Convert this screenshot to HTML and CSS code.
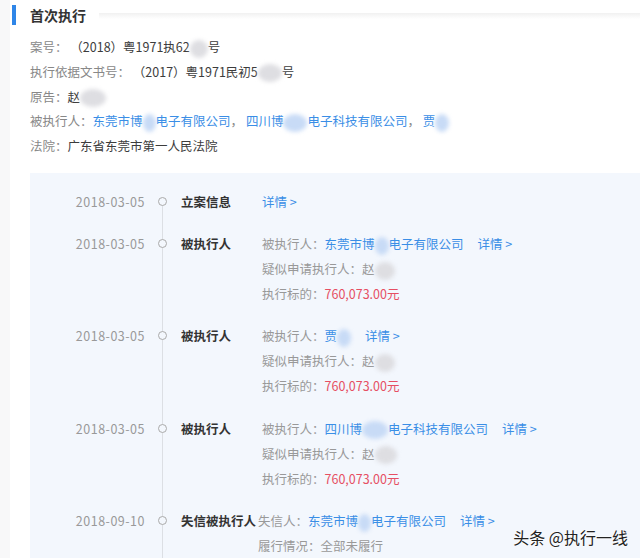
FILE: index.html
```html
<!DOCTYPE html>
<html lang="zh-CN">
<head>
  <meta charset="UTF-8" />
  <title>首次执行</title>
  <link rel="stylesheet" href="styles.css">
</head>
<body>

<div class="card">
  <div class="heading">
    <span class="heading-bar"></span>
    <h2>首次执行</h2>
    <span class="heading-line"></span>
  </div>

  <div class="info">
    <p><span class="label">案号：</span> （2018）粤1971执62<span class="blot" style="width:18px"></span>号</p>
    <p><span class="label">执行依据文书号：</span> （2017）粤1971民初5<span class="blot" style="width:24px"></span>号</p>
    <p><span class="label">原告：</span>赵<span class="blot" style="width:26px"></span></p>
    <p><span class="label">被执行人：</span><a class="link">东莞市博<span class="blot blue" style="width:13px"></span>电子有限公司</a><span class="label">，</span> <a class="link">四川博<span class="blot blue" style="width:24px"></span>电子科技有限公司</a><span class="label">，</span> <a class="link">贾<span class="blot blue" style="width:14px"></span></a></p>
    <p><span class="label">法院：</span>广东省东莞市第一人民法院</p>
  </div>

  <div class="timeline">
    <div class="entry first">
      <span class="date">2018-03-05</span>
      <span class="axis"><i class="dot"></i></span>
      <span class="title">立案信息</span>
      <div class="detail">
        <p><a class="link">详情 &gt;</a></p>
      </div>
    </div>

    <div class="entry">
      <span class="date">2018-03-05</span>
      <span class="axis"><i class="dot"></i></span>
      <span class="title">被执行人</span>
      <div class="detail">
        <p>被执行人：<a class="link">东莞市博<span class="blot blue" style="width:14px"></span>电子有限公司</a><a class="link more">详情 &gt;</a></p>
        <p>疑似申请执行人：赵<span class="blot" style="width:20px"></span></p>
        <p>执行标的：<span class="money">760,073.00元</span></p>
      </div>
    </div>

    <div class="entry">
      <span class="date">2018-03-05</span>
      <span class="axis"><i class="dot"></i></span>
      <span class="title">被执行人</span>
      <div class="detail">
        <p>被执行人：<a class="link">贾<span class="blot blue" style="width:14px"></span></a><a class="link more">详情 &gt;</a></p>
        <p>疑似申请执行人：赵<span class="blot" style="width:20px"></span></p>
        <p>执行标的：<span class="money">760,073.00元</span></p>
      </div>
    </div>

    <div class="entry">
      <span class="date">2018-03-05</span>
      <span class="axis"><i class="dot"></i></span>
      <span class="title">被执行人</span>
      <div class="detail">
        <p>被执行人：<a class="link">四川博<span class="blot blue" style="width:26px"></span>电子科技有限公司</a><a class="link more">详情 &gt;</a></p>
        <p>疑似申请执行人：赵<span class="blot" style="width:22px"></span></p>
        <p>执行标的：<span class="money">760,073.00元</span></p>
      </div>
    </div>

    <div class="entry wide">
      <span class="date">2018-09-10</span>
      <span class="axis"><i class="dot"></i></span>
      <span class="title">失信被执行人</span>
      <div class="detail">
        <p>失信人：<a class="link">东莞市博<span class="blot blue" style="width:13px"></span>电子有限公司</a><a class="link more">详情 &gt;</a></p>
        <p>履行情况：全部未履行</p>
      </div>
    </div>
  </div>
</div>

<div class="watermark">头条 @执行一线</div>

</body>
</html>
```

FILE: styles.css
```css
html, body {
  height: 558px;
  overflow: hidden;
}
body {
  margin: 0;
  background: #f8f8f9;
  font-family: "Noto Sans CJK SC", "Liberation Sans", sans-serif;
  font-size: 12.5px;
  color: #3c3c3c;
  position: relative;
}
p {
  margin: 0;
}
.card {
  margin-left: 10px;
  padding-left: 2px;
  background: #fff;
  height: 100%;
  overflow: hidden;
}
.heading {
  display: flex;
  align-items: center;
  height: 20px;
  padding-top: 5px;
}
.heading-bar {
  width: 4px;
  height: 20px;
  background: #2f86e8;
}
.heading h2 {
  margin: 0 0 0 14px;
  font-size: 14px;
  font-weight: bold;
  color: #333;
  line-height: 20px;
}
.heading-line {
  flex: 1;
  height: 6px;
  margin: 0 0 -2px 13px;
  background: linear-gradient(#f1f1f1, rgba(255,255,255,0));
}
.info {
  margin-top: 10px;
  padding-left: 18px;
  line-height: 24.75px;
  white-space: nowrap;
}
.label {
  color: #888;
}
.link {
  color: #3a8ee6;
  text-decoration: none;
}
.blot {
  display: inline-block;
  height: 18px;
  vertical-align: middle;
  border-radius: 50%;
  background: #dedee2;
  filter: blur(2px);
}
.blot.blue {
  background: #c8dbf6;
}
.timeline {
  margin: 14px 0 0 18px;
  padding-top: 16px;
  background: #f3f7fd;
  height: 370px;
  overflow: hidden;
}
.entry {
  display: grid;
  grid-template-columns: 115px 36px auto 1fr;
  padding-bottom: 17.3px;
  line-height: 25px;
}
.date {
  text-align: right;
  color: #999;
  letter-spacing: 0.5px;
}
.axis {
  position: relative;
}
.axis::before {
  content: "";
  position: absolute;
  left: 17px;
  top: 0;
  bottom: -17.3px;
  border-left: 1px solid #dcdfe4;
}
.entry.first .axis::before {
  top: 12px;
}
.dot {
  position: absolute;
  left: 13px;
  top: 8px;
  width: 7px;
  height: 7px;
  border: 1px solid #aaa;
  border-radius: 50%;
  background: #f3f7fd;
}
.title {
  font-weight: bold;
  color: #333;
  min-width: 79px;
  padding-right: 2px;
}
.entry.wide .title {
  min-width: 0;
}
.detail {
  color: #999;
  white-space: nowrap;
}
.more {
  margin-left: 14px;
}
.money {
  color: #e64f63;
}
.watermark {
  position: absolute;
  right: 12px;
  bottom: 9px;
  font-size: 16px;
  color: #222;
  text-shadow: 0 0 2px #fff, 0 0 2px #fff;
}
```
